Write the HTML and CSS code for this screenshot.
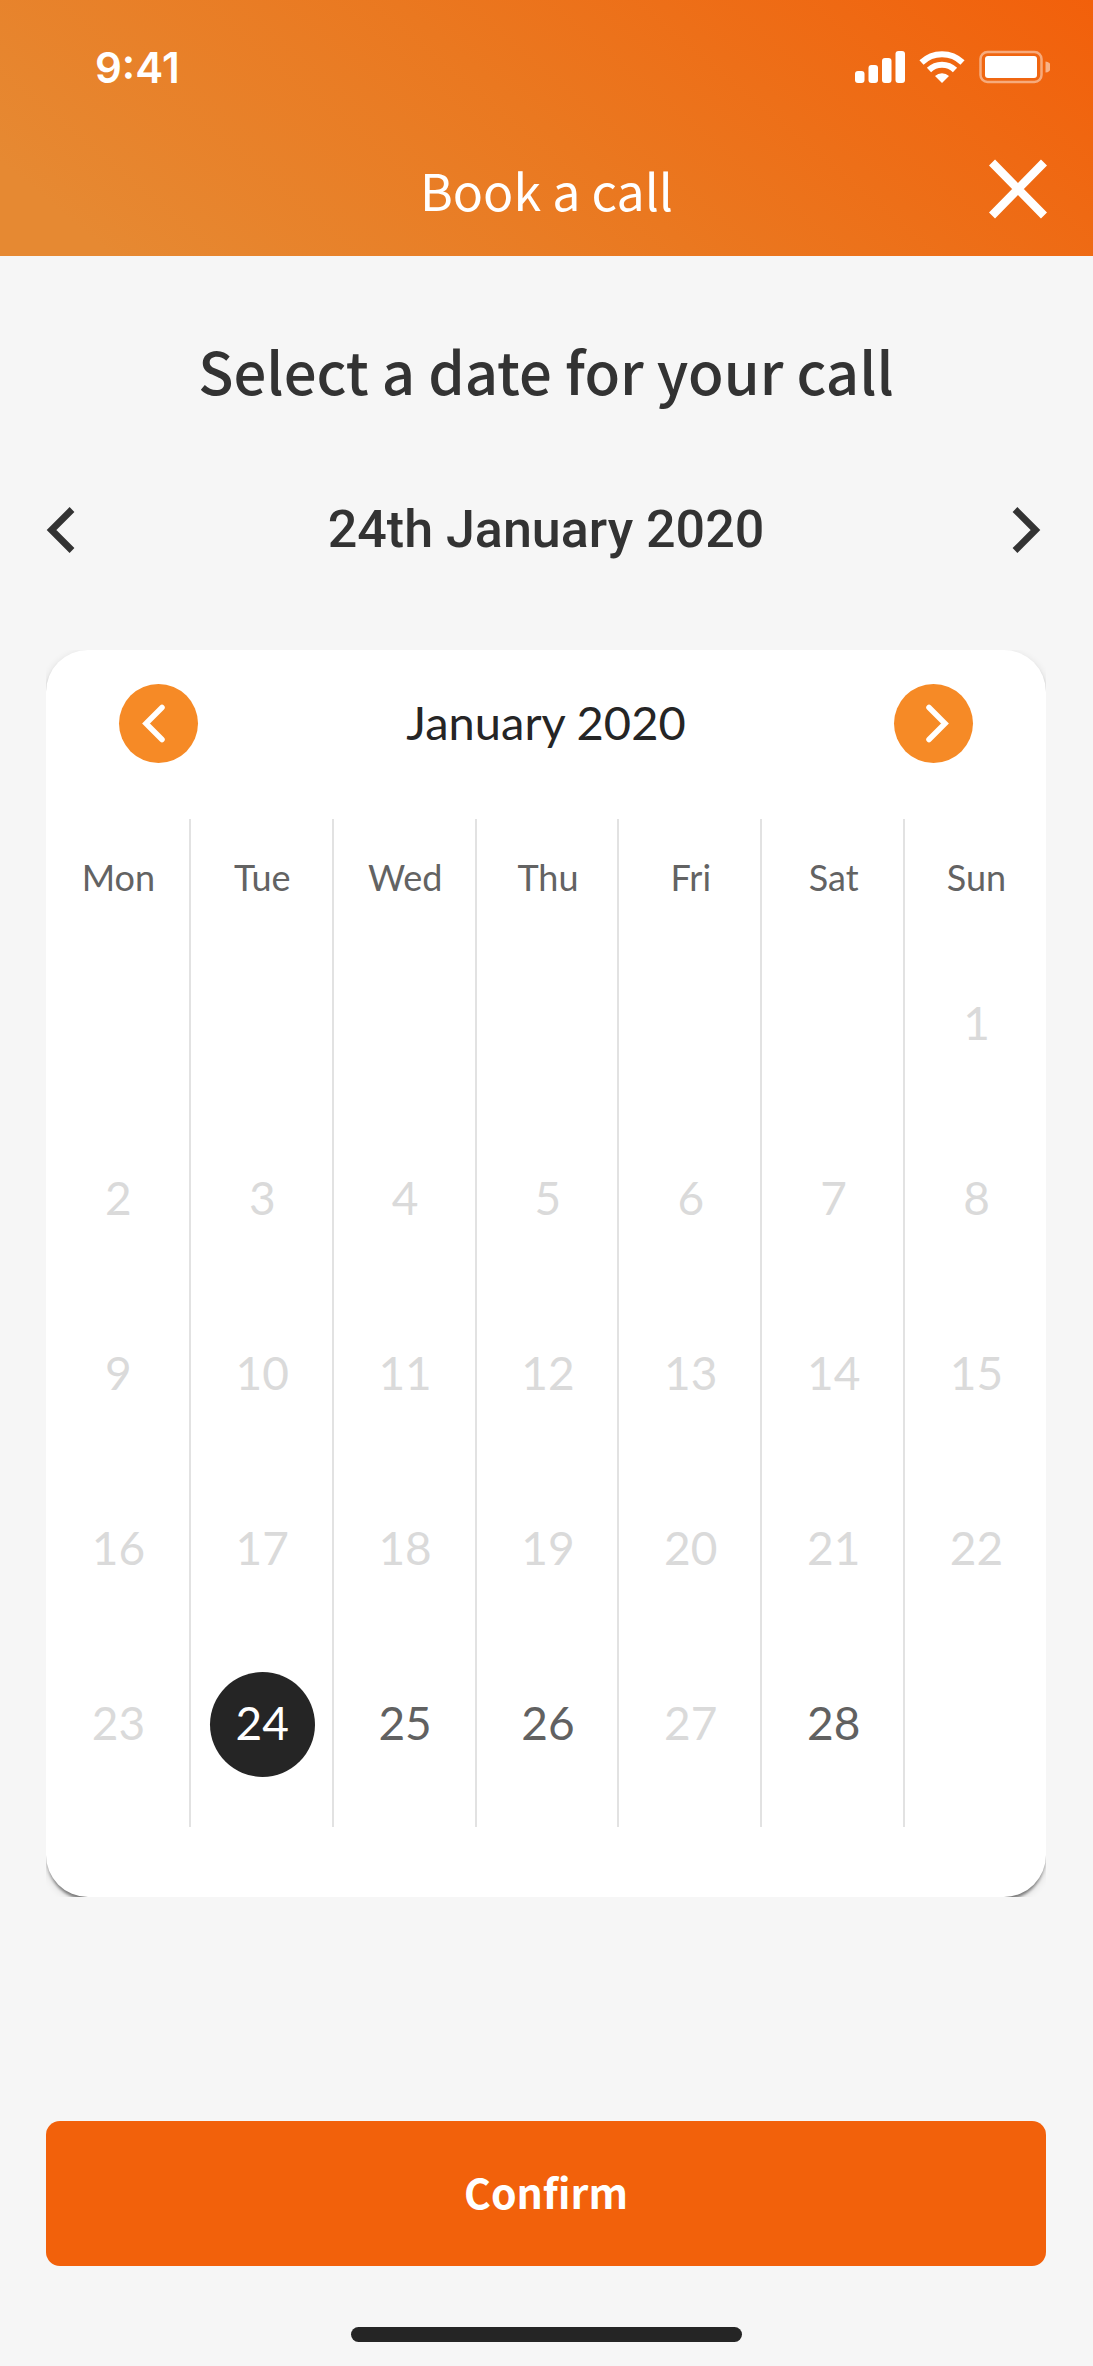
FILE: index.html
```html
<!DOCTYPE html>
<html lang="en">
<head>
<meta charset="utf-8">
<meta name="viewport" content="width=device-width, initial-scale=1">
<title>Book a call</title>
<link rel="stylesheet" href="styles.css">
</head>
<body>
<header class="top">
  <div class="status">
    <time class="clock">9:41</time>
    <svg class="status-icons" width="195" height="34" viewBox="0 0 195 34" aria-hidden="true">
      <g fill="#fff">
        <rect x="0" y="21" width="9.500" height="12" rx="3"/>
        <rect x="13.500" y="15" width="9.500" height="18" rx="3"/>
        <rect x="27" y="8" width="9.500" height="25" rx="3"/>
        <rect x="40.500" y="1" width="9.500" height="32" rx="3"/>
        <path d="M87 33 L80 26 A10.500 10.500 0 0 1 94 26 Z"/>
        <rect x="130" y="6" width="52" height="22" rx="3"/>
      </g>
      <g fill="none" stroke="#fff" stroke-width="6">
        <path d="M66.500 12.500 A29.500 29.500 0 0 1 107.500 12.500"/>
        <path d="M74 20 A18.500 18.500 0 0 1 100 20"/>
      </g>
      <rect x="125.500" y="2" width="61" height="30" rx="7" fill="none" stroke="#fff" stroke-opacity=".45" stroke-width="2.500"/>
      <path d="M190.500 11.500 a5.500 5.500 0 0 1 0 11 Z" fill="#fff" fill-opacity=".5"/>
    </svg>
  </div>
  <div class="bar">
    <h1 class="bar-title">Book a call</h1>
    <button class="close" type="button" aria-label="Close">
      <svg width="58" height="60" viewBox="0 0 58 60"><path d="M3 3.500 L55 56.500 M55 3.500 L3 56.500" stroke="#fff" stroke-width="8.500" fill="none"/></svg>
    </button>
  </div>
</header>
<main class="content">
  <h2 class="heading">Select a date for your call</h2>
  <div class="day-nav">
    <button class="chev" type="button" aria-label="Previous day">
      <svg width="34" height="46" viewBox="0 0 34 46"><path d="M26 2.500 L5.500 23 L26 43.500" fill="none" stroke="#333" stroke-width="6.800"/></svg>
    </button>
    <p class="day">24th January 2020</p>
    <button class="chev" type="button" aria-label="Next day">
      <svg width="34" height="46" viewBox="0 0 34 46"><path d="M3 2.500 L23.500 23 L3 43.500" fill="none" stroke="#333" stroke-width="6.800"/></svg>
    </button>
  </div>
  <div class="card-clip">
    <section class="card" aria-label="Calendar">
      <div class="month-nav">
        <button class="round" type="button" aria-label="Previous month">
          <svg width="79" height="79" viewBox="0 0 79 79"><path d="M43 23.500 L27 39.500 L43 55.500" fill="none" stroke="#fff" stroke-width="5.500" stroke-linecap="round"/></svg>
        </button>
        <h3 class="month">January 2020</h3>
        <button class="round" type="button" aria-label="Next month">
          <svg width="79" height="79" viewBox="0 0 79 79"><path d="M35 23.500 L51 39.500 L35 55.500" fill="none" stroke="#fff" stroke-width="5.500" stroke-linecap="round"/></svg>
        </button>
      </div>
      <table class="calendar">
        <thead>
          <tr><th scope="col">Mon</th><th scope="col">Tue</th><th scope="col">Wed</th><th scope="col">Thu</th><th scope="col">Fri</th><th scope="col">Sat</th><th scope="col">Sun</th></tr>
        </thead>
        <tbody>
          <tr><td></td><td></td><td></td><td></td><td></td><td></td><td><button class="date" disabled>1</button></td></tr>
          <tr><td><button class="date" disabled>2</button></td><td><button class="date" disabled>3</button></td><td><button class="date" disabled>4</button></td><td><button class="date" disabled>5</button></td><td><button class="date" disabled>6</button></td><td><button class="date" disabled>7</button></td><td><button class="date" disabled>8</button></td></tr>
          <tr><td><button class="date" disabled>9</button></td><td><button class="date" disabled>10</button></td><td><button class="date" disabled>11</button></td><td><button class="date" disabled>12</button></td><td><button class="date" disabled>13</button></td><td><button class="date" disabled>14</button></td><td><button class="date" disabled>15</button></td></tr>
          <tr><td><button class="date" disabled>16</button></td><td><button class="date" disabled>17</button></td><td><button class="date" disabled>18</button></td><td><button class="date" disabled>19</button></td><td><button class="date" disabled>20</button></td><td><button class="date" disabled>21</button></td><td><button class="date" disabled>22</button></td></tr>
          <tr><td><button class="date" disabled>23</button></td><td><button class="date selected" type="button" aria-pressed="true">24</button></td><td><button class="date" type="button">25</button></td><td><button class="date" type="button">26</button></td><td><button class="date" disabled>27</button></td><td><button class="date" type="button">28</button></td><td></td></tr>
        </tbody>
      </table>
    </section>
  </div>
  <button class="confirm" type="button">Confirm</button>
</main>
<div class="home-bar"></div>
</body>
</html>
```
FILE: styles.css
```css
* {
  box-sizing: border-box;
}

body {
  margin: 0;
  min-height: 100vh;
  display: flex;
  flex-direction: column;
  background: #f6f6f6;
  color: #333;
  font-family: Lato, "Liberation Sans", sans-serif;
}

h1,
h2,
h3,
p {
  margin: 0;
}

button {
  margin: 0;
  padding: 0;
  border: 0;
  background: none;
  color: inherit;
  font: inherit;
}

svg {
  display: block;
}

/* Header */
.top {
  height: 256px;
  color: #fff;
  background: linear-gradient(40deg, #e68932 8%, #ea7820 50%, #f2600b 100%);
}

.status {
  display: flex;
  justify-content: space-between;
  align-items: center;
  height: 134px;
  padding: 0 43px 0 95px;
}

.clock {
  padding-top: 2px;
  font: 600 42px/48px Inter, sans-serif;
}

.bar {
  display: grid;
  grid-template-columns: 58px 1fr 58px;
  align-items: center;
  height: 110px;
  padding: 0 46px;
}

.bar-title {
  grid-column: 2;
  text-align: center;
  font: 400 50px/64px "Noto Sans CJK JP", sans-serif;
}

/* Date selection */
.content {
  flex: 1;
  display: flex;
  flex-direction: column;
  padding: 76px 47px 61px 46px;
}

.heading {
  text-align: center;
  font: 500 58px/76px "Noto Sans CJK JP", sans-serif;
}

.day-nav {
  display: flex;
  justify-content: space-between;
  align-items: center;
  height: 76px;
  margin: 84px 0 82px;
}

.day {
  font: 500 52px/64px Roboto, sans-serif;
}

/* The clip keeps the card's shadow inside its own corners. */
.card-clip {
  overflow: hidden;
}

.card {
  padding: 34px 0 70px;
  border-radius: 42px;
  background: #fff;
  box-shadow: 0 6px 3px -3px rgba(0, 0, 0, .3), 0 3px 3px rgba(0, 0, 0, .2), 0 3px 9px rgba(0, 0, 0, .14);
}

.month-nav {
  display: flex;
  justify-content: space-between;
  align-items: center;
  padding: 0 73px;
}

.round {
  border-radius: 50%;
  background: #f68a26;
}

.month {
  padding-bottom: 4px;
  color: #252525;
  font-size: 47px;
  line-height: 56px;
  font-weight: 400;
}

.calendar {
  width: 100%;
  margin-top: 56px;
  table-layout: fixed;
  border-collapse: separate;
  border-spacing: 0;
}

.calendar th,
.calendar td {
  padding: 0;
  text-align: center;
  vertical-align: middle;
}

.calendar th + th,
.calendar td + td {
  border-left: 2px solid #e2e2e2;
}

.calendar th {
  height: 118px;
  padding: 0 0 2px 2px;
  color: #636363;
  font-size: 36px;
  font-weight: 400;
}

.calendar td {
  height: 175px;
  padding-left: 2px;
}

.calendar tr:last-child td {
  height: 190px;
  padding-bottom: 15px;
}

.date {
  width: 105px;
  height: 105px;
  padding-bottom: 4px;
  border-radius: 50%;
  color: #616161;
  font-size: 46px;
  line-height: 56px;
}

.date:disabled {
  color: #dadada;
}

.date.selected {
  background: #252525;
  color: #fff;
}

.confirm {
  height: 145px;
  margin-top: auto;
  padding-bottom: 6px;
  border-radius: 14px;
  background: #f2610b;
  color: #fff;
  font: 700 41px/56px "Noto Sans CJK JP", sans-serif;
}

.home-bar {
  width: 391px;
  height: 15px;
  margin: 0 auto 24px;
  border-radius: 8px;
  background: #252525;
}
```
